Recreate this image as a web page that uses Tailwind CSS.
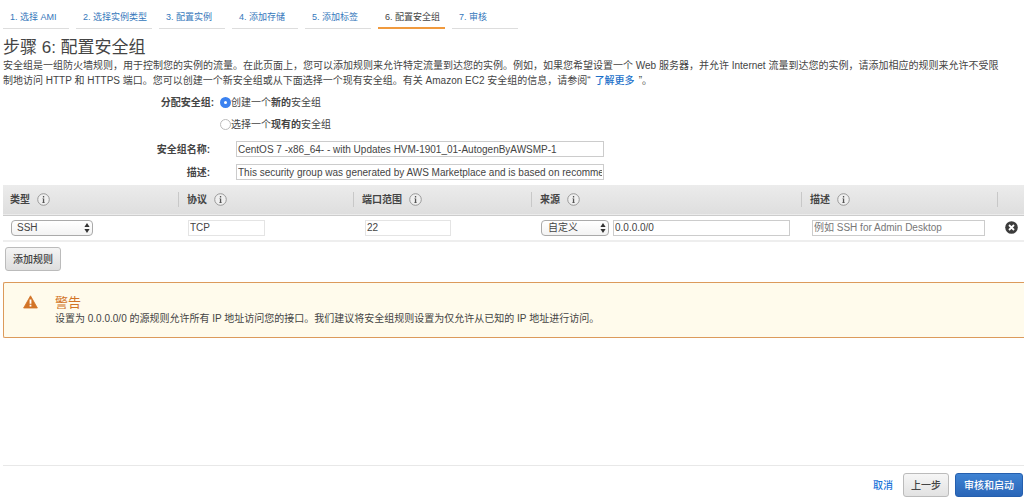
<!DOCTYPE html>
<html lang="zh-CN">
<head>
    <meta charset="UTF-8">
    <meta name="viewport" content="width=device-width, initial-scale=1.0">
    <title>步骤 6: 配置安全组</title>
    <script src="https://cdn.jsdelivr.net/npm/@tailwindcss/browser@4"></script>
</head>
<body class="flex min-h-screen flex-col bg-white pl-[3px] font-['Liberation_Sans','Noto_Sans_CJK_SC',sans-serif] text-[10px] leading-[15px] text-[#444]">
    <!-- Icons -->
    <svg class="hidden">
        <symbol id="info" viewBox="0 0 13 13">
            <circle cx="6.5" cy="6.5" r="5.8" fill="#efefef" stroke="#999" stroke-width="1"/>
            <path d="M5.9 3.1h1.3v1.3H5.9zM5.4 5.4h1.8v3.9h.5v.6H5.3v-.6h.6V6h-.5z" fill="#555"/>
        </symbol>
        <symbol id="updown" viewBox="0 0 6 10">
            <path d="M3 0L5.6 4H.4zM3 10L.4 6h5.2z" fill="#333"/>
        </symbol>
    </svg>

    <!-- Wizard steps -->
    <nav class="flex gap-[7px] pt-[7px] text-[9px] leading-5 text-[#3577bb]">
        <a href="#" class="min-w-[66px] border-b border-[#ddd] pl-[7px] pr-[5px]">1. 选择 AMI</a>
        <a href="#" class="min-w-[66px] border-b border-[#ddd] pl-[7px] pr-[5px]">2. 选择实例类型</a>
        <a href="#" class="min-w-[66px] border-b border-[#ddd] pl-[7px] pr-[5px]">3. 配置实例</a>
        <a href="#" class="min-w-[66px] border-b border-[#ddd] pl-[7px] pr-[5px]">4. 添加存储</a>
        <a href="#" class="min-w-[66px] border-b border-[#ddd] pl-[7px] pr-[5px]">5. 添加标签</a>
        <a href="#" aria-current="step" class="min-w-[66px] border-b-2 border-[#f09a3e] pl-[7px] pr-[5px] text-[#444]">6. 配置安全组</a>
        <a href="#" class="min-w-[66px] border-b border-[#ddd] pl-[7px] pr-[5px]">7. 审核</a>
    </nav>

    <main>
        <h1 class="mt-[9px] text-[17px] leading-5">步骤 6: 配置安全组</h1>
        <p class="pr-6">安全组是一组防火墙规则，用于控制您的实例的流量。在此页面上，您可以添加规则来允许特定流量到达您的实例。例如，如果您希望设置一个 Web 服务器，并允许 Internet 流量到达您的实例，请添加相应的规则来允许不受限制地访问 HTTP 和 HTTPS 端口。您可以创建一个新安全组或从下面选择一个现有安全组。有关 Amazon EC2 安全组的信息，请参阅“<a href="#" class="mx-1 font-medium text-[#1a6fc9]">了解更多</a>”。</p>

        <form>
            <fieldset class="mt-[7px] flex">
                <legend class="float-left w-[211px] text-right font-bold">分配安全组:</legend>
                <div class="flex flex-col gap-[7px] pl-1.5">
                    <label class="flex items-center"><input type="radio" name="assign" checked class="size-[11px] appearance-none rounded-full border border-[#bbb] bg-white checked:border-4 checked:border-[#3b82f0]"><span>创建一个<b>新的</b>安全组</span></label>
                    <label class="flex items-center"><input type="radio" name="assign" class="size-[11px] appearance-none rounded-full border border-[#bbb] bg-white checked:border-4 checked:border-[#3b82f0]"><span>选择一个<b>现有的</b>安全组</span></label>
                </div>
            </fieldset>
            <div class="mt-[9px] flex items-center">
                <label for="name" class="w-[207px] text-right font-bold">安全组名称:</label>
                <input id="name" type="text" value="CentOS 7 -x86_64- - with Updates HVM-1901_01-AutogenByAWSMP-1" class="ml-[26px] h-4 w-[368px] border border-[#ccc] px-px">
            </div>
            <div class="mt-[7px] flex items-center">
                <label for="desc" class="w-[207px] text-right font-bold">描述:</label>
                <input id="desc" type="text" value="This security group was generated by AWS Marketplace and is based on recommended settings" class="ml-[26px] h-4 w-[368px] border border-[#ccc] px-px">
            </div>
        </form>

        <!-- Rules -->
        <table class="mt-[5px] w-full table-fixed">
            <thead class="h-[30px] border-b border-[#ccc] bg-linear-to-b from-[#ececec] to-[#dedede] text-left">
                <tr>
                    <th class="w-[175px]"><div class="flex items-center gap-[7px] pl-[7px]">类型 <svg class="size-[13px]"><use href="#info"/></svg></div></th>
                    <th class="w-[175px]"><div class="flex items-center gap-[7px] border-l border-[#c8c8c8] pl-2">协议 <svg class="size-[13px]"><use href="#info"/></svg></div></th>
                    <th class="w-[178px]"><div class="flex items-center gap-[7px] border-l border-[#c8c8c8] pl-2">端口范围 <svg class="size-[13px]"><use href="#info"/></svg></div></th>
                    <th><div class="flex items-center gap-[7px] border-l border-[#c8c8c8] pl-2">来源 <svg class="size-[13px]"><use href="#info"/></svg></div></th>
                    <th class="w-[196px]"><div class="flex items-center gap-[7px] border-l border-[#c8c8c8] pl-2">描述 <svg class="size-[13px]"><use href="#info"/></svg></div></th>
                    <th class="w-[27px]"><div class="h-[15px] border-l border-[#c8c8c8]"></div></th>
                </tr>
            </thead>
            <tbody>
                <tr class="h-[26px] border-b-2 border-[#eee]">
                    <td class="pl-2">
                        <div class="relative flex w-[82px] items-center">
                            <select aria-label="类型" class="h-4 w-full appearance-none rounded-sm border border-[#aaa] bg-linear-to-b from-white to-[#f3f3f3] pl-[5px] leading-[14px]"><option>SSH</option></select>
                            <svg class="pointer-events-none absolute right-[3px] h-2.5 w-1.5"><use href="#updown"/></svg>
                        </div>
                    </td>
                    <td class="pl-[10px]"><input type="text" aria-label="协议" value="TCP" class="block h-4 w-[77px] border border-[#e4e4e4] px-px"></td>
                    <td class="pl-3"><input type="text" aria-label="端口范围" value="22" class="block h-4 w-[86px] border border-[#e4e4e4] px-px"></td>
                    <td class="pl-[10px] pr-[11px]">
                        <div class="flex items-center gap-1">
                            <div class="relative flex w-[68px] shrink-0 items-center">
                                <select aria-label="来源" class="h-4 w-full appearance-none rounded-sm border border-[#aaa] bg-linear-to-b from-white to-[#f3f3f3] pl-[6px] leading-[14px]"><option>自定义</option></select>
                                <svg class="pointer-events-none absolute right-[3px] h-2.5 w-1.5"><use href="#updown"/></svg>
                            </div>
                            <input type="text" aria-label="来源 IP" value="0.0.0.0/0" class="block h-4 min-w-0 grow border border-[#ccc] px-px">
                        </div>
                    </td>
                    <td class="pl-[11px] pr-3"><input type="text" aria-label="描述" placeholder="例如 SSH for Admin Desktop" class="block h-4 w-full border border-[#ccc] px-px placeholder:text-[#777]"></td>
                    <td class="pl-2">
                        <button type="button" aria-label="删除" class="block">
                            <svg class="size-[13px]" viewBox="0 0 13 13"><circle cx="6.5" cy="6.5" r="6.3" fill="#3c3c3c"/><path d="M4 4l5 5M9 4L4 9" stroke="#fff" stroke-width="1.8"/></svg>
                        </button>
                    </td>
                </tr>
            </tbody>
        </table>

        <button type="button" class="mt-[5px] ml-0.5 block h-6 rounded-[3px] border border-[#bbb] bg-linear-to-b from-[#f4f4f4] to-[#dedede] px-[7px] font-medium">添加规则</button>

        <!-- Warning -->
        <div role="alert" class="mt-[11px] flex rounded-l-xs border border-r-0 border-[#dc9a5b] bg-[#fffbec] pt-3 pb-[11px] pl-[19px]">
            <svg class="h-[14px] w-[15px] shrink-0" viewBox="0 0 15 14"><path d="M7.5.8L14.4 13H.6z" fill="#d27427" stroke="#d27427" stroke-width=".8" stroke-linejoin="round"/><path d="M6.6 4.6h1.8v4.2H6.6zM6.6 9.8h1.8v1.7H6.6z" fill="#fff"/></svg>
            <div class="pl-[17px]">
                <h2 class="text-[13px] leading-4 text-[#d27427]">警告</h2>
                <p>设置为 0.0.0.0/0 的源规则允许所有 IP 地址访问您的接口。我们建议将安全组规则设置为仅允许从已知的 IP 地址进行访问。</p>
            </div>
        </div>
    </main>

    <footer class="mt-auto flex items-center justify-end gap-1.5 border-t border-[#e8e8e8] pt-[7px] pr-px pb-1.5 font-medium">
        <a href="#" class="mr-1 text-[#1a73d9]">取消</a>
        <button type="button" class="h-6 rounded-[3px] border border-[#bbb] bg-linear-to-b from-[#f6f6f6] to-[#e2e2e2] px-[7px]">上一步</button>
        <button type="button" class="h-6 rounded-[3px] border border-[#255fae] bg-linear-to-b from-[#3f83d3] to-[#2a66b8] px-2 text-white">审核和启动</button>
    </footer>
</body>
</html>
